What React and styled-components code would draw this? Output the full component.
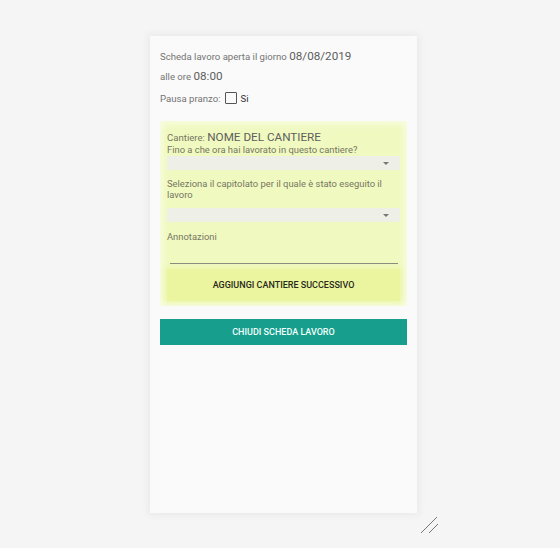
import React from "react";
import styled, { createGlobalStyle } from "styled-components";

const Global = createGlobalStyle`
  html, body {
    margin: 0;
    padding: 0;
    background: #f5f5f5;
    font-family: Roboto, "Liberation Sans", sans-serif;
  }
`;

const Page = styled.div`
  position: relative;
  width: 560px;
  height: 548px;
  padding: 36px 0 0 150px;
  box-sizing: border-box;
`;

const Card = styled.div`
  width: 267px;
  height: 477px;
  background: #fafafa;
  box-shadow: 0 0 8px 2px rgba(0, 0, 0, 0.05);
  padding: 11px 10px;
  box-sizing: border-box;
  display: flex;
  flex-direction: column;
`;

const Line = styled.div`
  font-size: 9.6px;
  color: #747474;
  line-height: 18px;
  margin-bottom: 1px;
`;

const Big = styled.span`
  font-size: 11.7px;
  color: #5e5e5e;
`;

const PauseRow = styled.div`
  display: flex;
  align-items: center;
  gap: 4px;
  font-size: 9.6px;
  color: #747474;
  margin-top: 3px;
  height: 16px;
`;

const Check = styled.span`
  width: 10px;
  height: 10px;
  border: 1.5px solid #555;
  border-radius: 1px;
`;

const Si = styled.span`
  color: #333;
  font-size: 9.6px;
`;

const Panel = styled.div`
  margin-top: 15px;
  background: #f0f9bf;
  box-shadow: inset 0 0 6px 3px rgba(250, 252, 235, 0.8);
  padding: 10px 7px 5px 7px;
  display: flex;
  flex-direction: column;
`;

const Label = styled.div`
  font-size: 9.4px;
  color: #767664;
  line-height: 11px;
`;

const Title = styled.div`
  font-size: 9.6px;
  color: #767664;
  line-height: 13px;
`;

const TitleBig = styled.span`
  font-size: 11.7px;
  color: #5e5e5e;
`;

const Select = styled.div`
  height: 14px;
  margin: ${(p) => p.$before}px 0 ${(p) => p.$after}px 0;
  background: #eeefe6;
  display: flex;
  justify-content: flex-end;
  align-items: center;
  padding-right: 11px;
`;

const Arrow = styled.span`
  width: 0;
  height: 0;
  border-left: 3.5px solid transparent;
  border-right: 3.5px solid transparent;
  border-top: 3.5px solid #777;
`;

const NoteLine = styled.div`
  height: 1px;
  background: #8a8a7c;
  margin: 21px 2px 5px 3px;
`;

const AddButton = styled.div`
  height: 32px;
  background: #ebf5a0;
  box-shadow: 0 0 4px 2px rgba(235, 245, 160, 0.6);
  display: flex;
  align-items: center;
  justify-content: center;
  font-size: 9px;
  font-weight: 500;
  color: #2a2a1a;
`;

const CloseButton = styled.div`
  margin-top: 13px;
  height: 26px;
  background: #179e8c;
  display: flex;
  align-items: center;
  justify-content: center;
  font-size: 9px;
  font-weight: 500;
  color: #f2fffc;
`;

const Grip = styled.svg`
  position: absolute;
  left: 420px;
  top: 515px;
`;

export default function App() {
  return (
    <>
      <Global />
      <Page>
        <Card>
          <Line>
            Scheda lavoro aperta il giorno <Big>08/08/2019</Big>
          </Line>
          <Line>
            alle ore <Big>08:00</Big>
          </Line>
          <PauseRow>
            Pausa pranzo: <Check /> <Si>Si</Si>
          </PauseRow>
          <Panel>
            <Title>
              Cantiere: <TitleBig>NOME DEL CANTIERE</TitleBig>
            </Title>
            <Label>Fino a che ora hai lavorato in questo cantiere?</Label>
            <Select $before={1} $after={8}>
              <Arrow />
            </Select>
            <Label>Seleziona il capitolato per il quale è stato eseguito il lavoro</Label>
            <Select $before={8} $after={9}>
              <Arrow />
            </Select>
            <Label>Annotazioni</Label>
            <NoteLine />
            <AddButton>AGGIUNGI CANTIERE SUCCESSIVO</AddButton>
          </Panel>
          <CloseButton>CHIUDI SCHEDA LAVORO</CloseButton>
        </Card>
        <Grip width="20" height="20" viewBox="0 0 20 20">
          <line x1="1" y1="18" x2="17" y2="2" stroke="#555" strokeWidth="0.8" />
          <line x1="9" y1="18" x2="18" y2="9" stroke="#555" strokeWidth="0.8" />
        </Grip>
      </Page>
    </>
  );
}
